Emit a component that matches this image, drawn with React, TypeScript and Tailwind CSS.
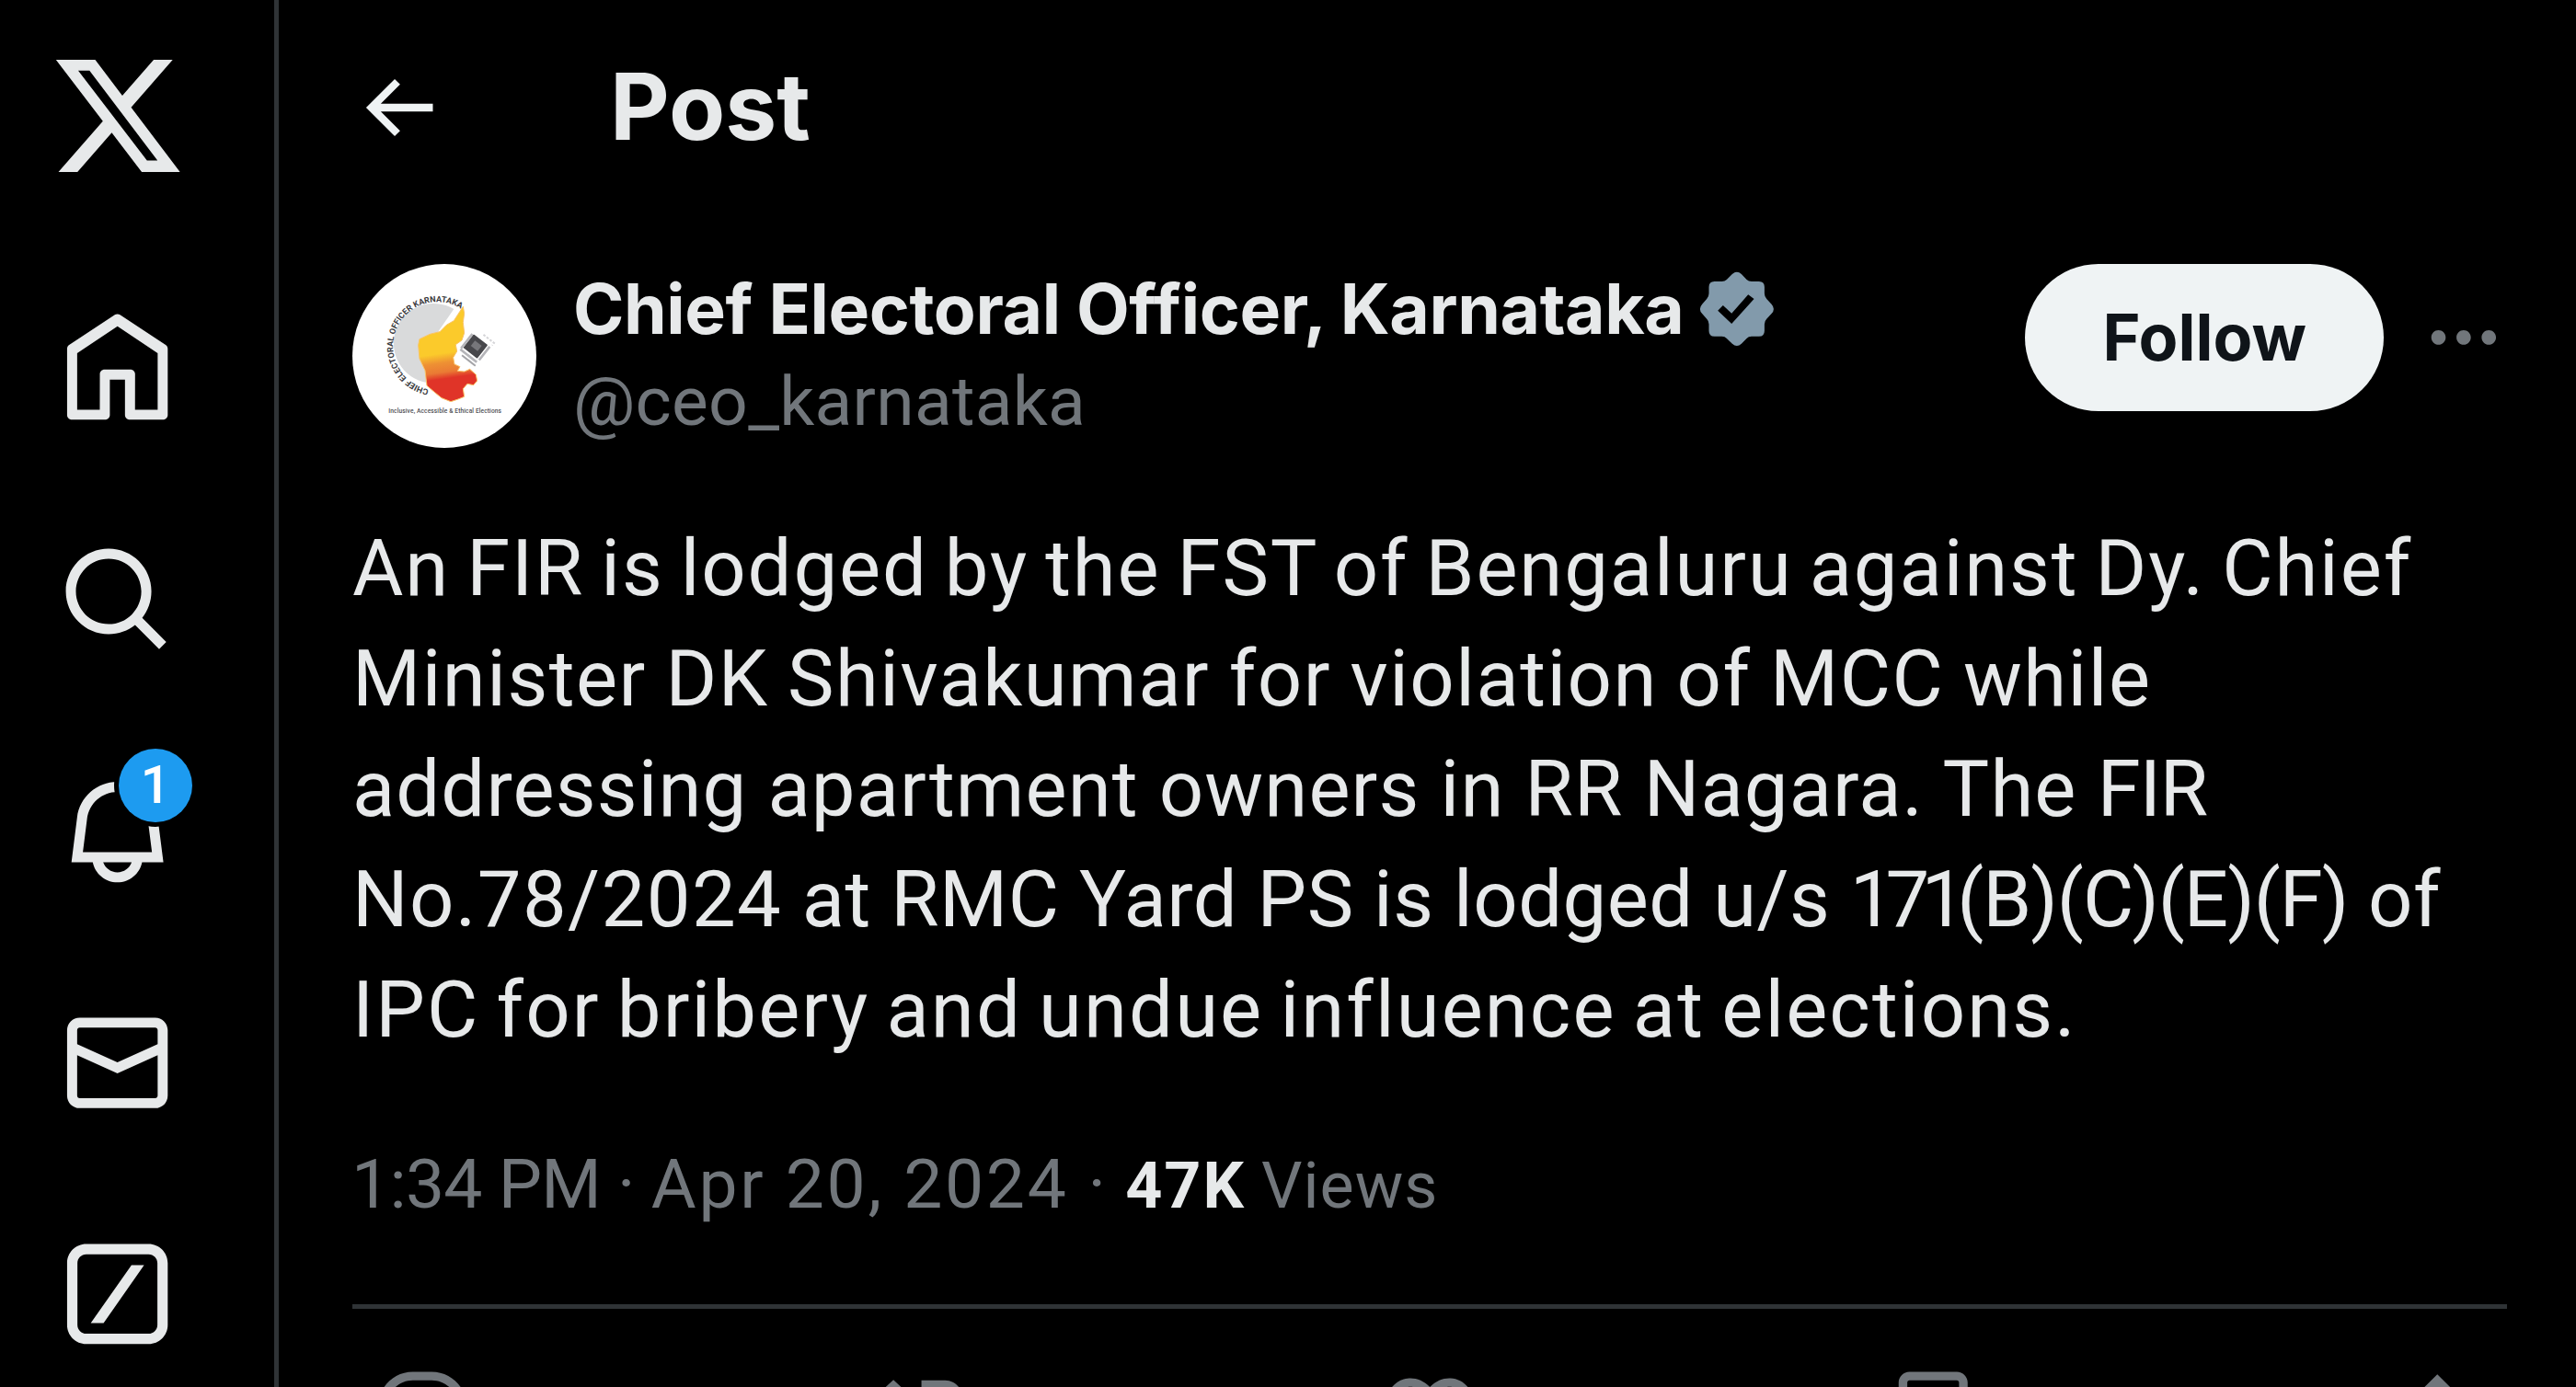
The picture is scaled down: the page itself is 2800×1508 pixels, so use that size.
import React from 'react';

interface IconProps {
    path: string;
    className?: string;
    viewBox?: string;
}

const Icon: React.FC<IconProps> = ({ path, className, viewBox = '0 0 24 24' }) => (
    <svg viewBox={viewBox} fill="currentColor" className={`shrink-0 ${className ?? ''}`} aria-hidden="true">
        <path d={path} />
    </svg>
);

const icons = {
    logo: 'M18.244 2.25h3.308l-7.227 8.26 8.502 11.24H16.17l-5.214-6.817L4.99 21.75H1.68l7.73-8.835L1.254 2.25H8.08l4.713 6.231zm-1.161 17.52h1.833L7.084 4.126H5.117z',
    home: 'M21.591 7.146L12.52 1.157c-.316-.21-.724-.21-1.04 0l-9.071 5.99c-.26.173-.409.456-.409.757v13.183c0 .502.418.913.929.913h6.638c.511 0 .929-.41.929-.913v-7.075h3.008v7.075c0 .502.418.913.929.913h6.639c.51 0 .928-.41.928-.913V7.904c0-.301-.158-.584-.408-.758zM20 20l-4.5.01.011-7.097c0-.502-.418-.913-.928-.913H9.44c-.511 0-.929.41-.929.913L8.5 20H4V8.773l8.011-5.342L20 8.764z',
    search: 'M10.25 3.75c-3.59 0-6.5 2.91-6.5 6.5s2.91 6.5 6.5 6.5c1.795 0 3.419-.726 4.596-1.904 1.178-1.177 1.904-2.801 1.904-4.596 0-3.59-2.91-6.5-6.5-6.5zm-8.5 6.5c0-4.694 3.806-8.5 8.5-8.5s8.5 3.806 8.5 8.5c0 1.986-.682 3.815-1.824 5.262l4.781 4.781-1.414 1.414-4.781-4.781c-1.447 1.142-3.276 1.824-5.262 1.824-4.694 0-8.5-3.806-8.5-8.5z',
    bell: 'M19.993 9.042C19.48 5.017 16.054 2 11.996 2s-7.49 3.021-7.999 7.051L2.866 18H7.1c.463 2.282 2.481 4 4.9 4s4.437-1.718 4.9-4h4.236l-1.143-8.958zM12 20c-1.306 0-2.417-.835-2.829-2h5.658c-.412 1.165-1.523 2-2.829 2zm-6.866-4l.847-6.698C6.364 6.272 8.941 4 11.996 4s5.627 2.268 6.013 5.295L18.864 16H5.134z',
    mail: 'M1.998 5.5c0-1.381 1.119-2.5 2.5-2.5h15c1.381 0 2.5 1.119 2.5 2.5v13c0 1.381-1.119 2.5-2.5 2.5h-15c-1.381 0-2.5-1.119-2.5-2.5v-13zm2.5-.5c-.276 0-.5.224-.5.5v2.764l8 3.638 8-3.636V5.5c0-.276-.224-.5-.5-.5h-15zm15.5 5.463l-8 3.636-8-3.638V18.5c0 .276.224.5.5.5h15c.276 0 .5-.224.5-.5v-8.037z',
    grok: 'M5.8 2.1h12.4c2.1 0 3.8 1.7 3.8 3.8v12.3c0 2.1-1.7 3.8-3.8 3.8H5.8c-2.1 0-3.8-1.7-3.8-3.8V5.9c0-2.1 1.7-3.8 3.8-3.8zm0 2.05c-.97 0-1.75.78-1.75 1.75v12.3c0 .97.78 1.75 1.75 1.75h12.4c.97 0 1.75-.78 1.75-1.75V5.9c0-.97-.78-1.75-1.75-1.75zM14.8 6.3h2.5L9.25 17.85H6.7z',
    back: 'M7.414 13l5.043 5.04-1.414 1.42L3.586 12l7.457-7.46 1.414 1.42L7.414 11H21v2H7.414z',
    verified: 'M189 87Q204 74 219 87L236 105Q242 111 252 111H276Q294 111 294 129V150Q294 161 301 168L317 185Q331 201 317 216L301 233Q294 240 294 250V272Q294 290 276 290H252Q242 290 236 297L219 314Q204 327 189 314L171 297Q165 290 155 290H131Q113 290 113 272V250Q113 240 106 233L91 216Q77 201 91 185L106 168Q113 161 113 150V129Q113 111 131 111H155Q165 111 171 105ZM142 206L187 249 260 168 241 154 187 215 159 189Z',
    more: 'M3 12c0-1.1.9-2 2-2s2 .9 2 2-.9 2-2 2-2-.9-2-2zm9 2c1.1 0 2-.9 2-2s-.9-2-2-2-2 .9-2 2 .9 2 2 2zm7 0c1.1 0 2-.9 2-2s-.9-2-2-2-2 .9-2 2 .9 2 2 2z',
    reply: 'M1.751 10c0-4.42 3.584-8 8.005-8h4.366c4.49 0 8.129 3.64 8.129 8.13 0 2.96-1.607 5.68-4.196 7.11l-8.054 4.46v-3.69h-.067c-4.49.1-8.183-3.51-8.183-8.01zm8.005-6c-3.317 0-6.005 2.69-6.005 6 0 3.37 2.77 6.08 6.138 6.01l.351-.01h1.761v2.3l5.087-2.81c1.951-1.08 3.163-3.13 3.163-5.36 0-3.39-2.744-6.13-6.129-6.13H9.756z',
    repost: 'M4.5 3.88l4.432 4.14-1.364 1.46L5.5 7.55V16c0 1.1.896 2 2 2H13v2H7.5c-2.209 0-4-1.79-4-4V7.55L1.432 9.48.068 8.02 4.5 3.88zM16.5 6H11V4h5.5c2.209 0 4 1.79 4 4v8.45l2.068-1.93 1.364 1.46-4.432 4.14-4.432-4.14 1.364-1.46 2.068 1.93V8c0-1.1-.896-2-2-2z',
    like: 'M16.697 5.5c-1.222-.06-2.679.51-3.89 2.16l-.805 1.09-.806-1.09C9.984 6.01 8.526 5.44 7.304 5.5c-1.243.07-2.349.78-2.91 1.91-.552 1.12-.633 2.78.479 4.82 1.074 1.97 3.257 4.27 7.129 6.61 3.87-2.34 6.052-4.64 7.126-6.61 1.111-2.04 1.03-3.7.477-4.82-.561-1.13-1.666-1.84-2.908-1.91zm4.187 7.69c-1.351 2.48-4.001 5.12-8.379 7.67l-.503.3-.504-.3c-4.379-2.55-7.029-5.19-8.382-7.67-1.36-2.5-1.41-4.86-.514-6.67.887-1.79 2.647-2.91 4.601-3.01 1.651-.09 3.368.56 4.798 2.01 1.429-1.45 3.146-2.1 4.796-2.01 1.954.1 3.714 1.22 4.601 3.01.896 1.81.846 4.17-.514 6.67z',
    bookmark: 'M4 4.5C4 3.12 5.119 2 6.5 2h11C18.881 2 20 3.12 20 4.5v18.44l-8-5.71-8 5.71V4.5zM6.5 4c-.276 0-.5.22-.5.5v14.56l6-4.29 6 4.29V4.5c0-.28-.224-.5-.5-.5h-11z',
    share: 'M12 2.59l5.7 5.7-1.41 1.42L13 6.41V16h-2V6.41l-3.3 3.3-1.41-1.42L12 2.59zM21 15l-.02 3.51c0 1.38-1.12 2.49-2.5 2.49H5.5C4.11 21 3 19.88 3 18.5V15h2v3.5c0 .28.22.5.5.5h12.98c.28 0 .5-.22.5-.5L19 15h2z',
};

const actions = [icons.reply, icons.repost, icons.like, icons.bookmark, icons.share];

const Sidebar: React.FC = () => (
    <nav className="flex w-[303px] shrink-0 flex-col border-r-[5px] border-[#2f3336] pr-[43px]">
        <div className="flex flex-col items-center pt-[51px]">
            <Icon path={icons.logo} className="size-[150px]" />
            <div className="mt-[135px] flex flex-col gap-[120px]">
                <Icon path={icons.home} className="size-[131.25px]" />
                <Icon path={icons.search} className="size-[131.25px]" />
                <div className="relative">
                    <Icon path={icons.bell} className="size-[131.25px]" />
                    <span className="absolute -top-[25px] left-[67px] flex size-20 items-center justify-center rounded-full bg-[#1d9bf0] text-[57px] leading-none font-medium text-white ring-[5px] ring-black">
                        1
                    </span>
                </div>
                <Icon path={icons.mail} className="size-[131.25px]" />
                <Icon path={icons.grok} className="size-[131.25px]" />
            </div>
        </div>
    </nav>
);

const Avatar: React.FC = () => (
    <svg viewBox="69 81 600 600" className="size-[200px] shrink-0 rounded-full bg-white">
        <defs>
            <linearGradient id="state" x1="0" y1="218" x2="0" y2="525" gradientUnits="userSpaceOnUse" gradientTransform="rotate(-8 370 370)">
                <stop offset="0.5" stopColor="#fbca2b" />
                <stop offset="0.6" stopColor="#ee9133" />
                <stop offset="0.7" stopColor="#ea7a34" />
                <stop offset="0.77" stopColor="#e03428" />
            </linearGradient>
            <path id="seal" d="M318 490A144 144 0 1 1 440 240" />
        </defs>
        <path d="M312 468A130 130 0 1 1 400 228L350 300z" fill="#d9dadb" />
        <text fontSize="27" fontWeight="700" fill="#3a3a3e" fontFamily="Roboto, sans-serif">
            <textPath href="#seal">CHIEF ELECTORAL OFFICER KARNATAKA</textPath>
        </text>
        <path
            d="M430 220l4 22-4 30 4 34-8 24-20 14 4 22-12 20 4 22 18 8-8 14 22 2 18-8 20 18 4 20-12 14-20-4-14 16 4 26-20 8-24 8-30-12-22-18-26-22-6-50-18-38-4-44 4-20 34-16 32-8 22-22 24-14z"
            fill="url(#state)"
            stroke="#f9c469"
            strokeWidth="3"
            strokeLinejoin="round"
        />
        <g transform="rotate(38 470 352)">
            <rect x="440" y="322" width="58" height="56" rx="3" fill="#47474b" />
            <rect x="456" y="336" width="28" height="22" fill="#77777b" />
            <path d="M436 388h68M506 322v56M436 324v60" stroke="#b5b5b9" strokeWidth="8" fill="none" />
            <path d="M466 304h44v10" stroke="#d5d5d8" strokeWidth="6" strokeDasharray="8 5" fill="none" />
            <path d="M452 400h56" stroke="#a4a4a8" strokeWidth="6" />
        </g>
        <text x="187" y="566" fontSize="20" fontWeight="500" fill="#505055" fontFamily="Roboto, sans-serif" textLength="368">
            Inclusive, Accessible &amp; Ethical Elections
        </text>
    </svg>
);

const App: React.FC = () => {
    return (
        <div className="flex h-screen w-full overflow-hidden bg-black font-[Roboto,sans-serif] text-[#e7e9ea]">
            <Sidebar />

            <main className="flex min-w-0 flex-1 flex-col pr-[75px] pl-20">
                {/* Header */}
                <header className="flex h-[234px] shrink-0 items-center gap-[180px]">
                    <Icon path={icons.back} className="size-[100px] text-[#eff3f4]" />
                    <h2 className="-mt-[3px] font-[Inter,sans-serif] text-[100px] leading-[120px] font-bold">Post</h2>
                </header>

                <article className="pt-[53px]">
                    {/* Author */}
                    <div className="flex h-[200px] items-start">
                        <Avatar />
                        <div className="-mt-px ml-10 flex-1">
                            <div className="flex h-[100px] items-center">
                                <span className="font-[Inter,sans-serif] text-[75px] leading-[100px] font-bold tracking-[-0.4px] whitespace-nowrap">
                                    Chief Electoral Officer, Karnataka
                                </span>
                                <Icon path={icons.verified} viewBox="63.5 60 281 281" className="ml-[11px] size-[93.75px] text-[#829aab]" />
                            </div>
                            <div className="text-[75px] leading-[100px] font-[430] tracking-[0.25px] text-[#71767b]">@ceo_karnataka</div>
                        </div>
                        <button className="h-40 w-[390px] rounded-full bg-[#eff3f4] font-[Inter,sans-serif] text-[70px] font-bold text-[#0f1419]">
                            <span className="relative -top-px">Follow</span>
                        </button>
                        <div className="ml-10 flex h-40 items-center">
                            <Icon path={icons.more} className="size-[93.75px] text-[#71767b]" />
                        </div>
                    </div>

                    {/* Post text */}
                    <div className="mt-[71px] text-[85px] leading-[120px] font-[430] whitespace-nowrap">
                        <p className="tracking-[1.9px] [word-spacing:-5px]">An FIR is lodged by the FST of Bengaluru against Dy. Chief</p>
                        <p className="tracking-[1.48px] [word-spacing:-2px]">Minister DK Shivakumar for violation of MCC while</p>
                        <p className="tracking-[1.1px]">
                            addressing apartment owners in RR Nagara. The <span className="tracking-[-1px]">FIR</span>
                        </p>
                        <p className="tracking-[0.45px]">
                            <span className="tracking-[1.4px]">No.78/2024</span> at RMC Yard PS is lodged u/s{' '}
                            <span className="tracking-[-9px]">171</span>
                            <span className="tracking-[-1px]">(B)(C)(E)(F)</span> of
                        </p>
                        <p className="tracking-[2.1px] [word-spacing:-5px]">IPC for bribery and undue influence at elections.</p>
                    </div>

                    {/* Time and views */}
                    <div className="mt-[79px] flex items-baseline text-[75px] leading-[100px] font-[430] whitespace-nowrap text-[#71767b]">
                        <span className="-ml-px tracking-[2.7px]">
                            <span className="tracking-[-0.7px]">1:34 PM · </span>Apr 20, 2024
                        </span>
                        <span className="mx-[21px]">·</span>
                        <span className="text-[70px] font-bold tracking-[2px] text-[#e7e9ea]">47K</span>
                        <span className="ml-[17px] text-[70px] tracking-[1px]">Views</span>
                    </div>

                    {/* Actions */}
                    <div className="mt-[79px] flex justify-between border-t-[5px] border-[#2f3336] px-5 pt-[58.6px] text-[#71767b]">
                        {actions.map((path, i) => (
                            <Icon key={i} path={path} className="size-[112.5px]" />
                        ))}
                    </div>
                </article>
            </main>
        </div>
    );
};

export default App;
